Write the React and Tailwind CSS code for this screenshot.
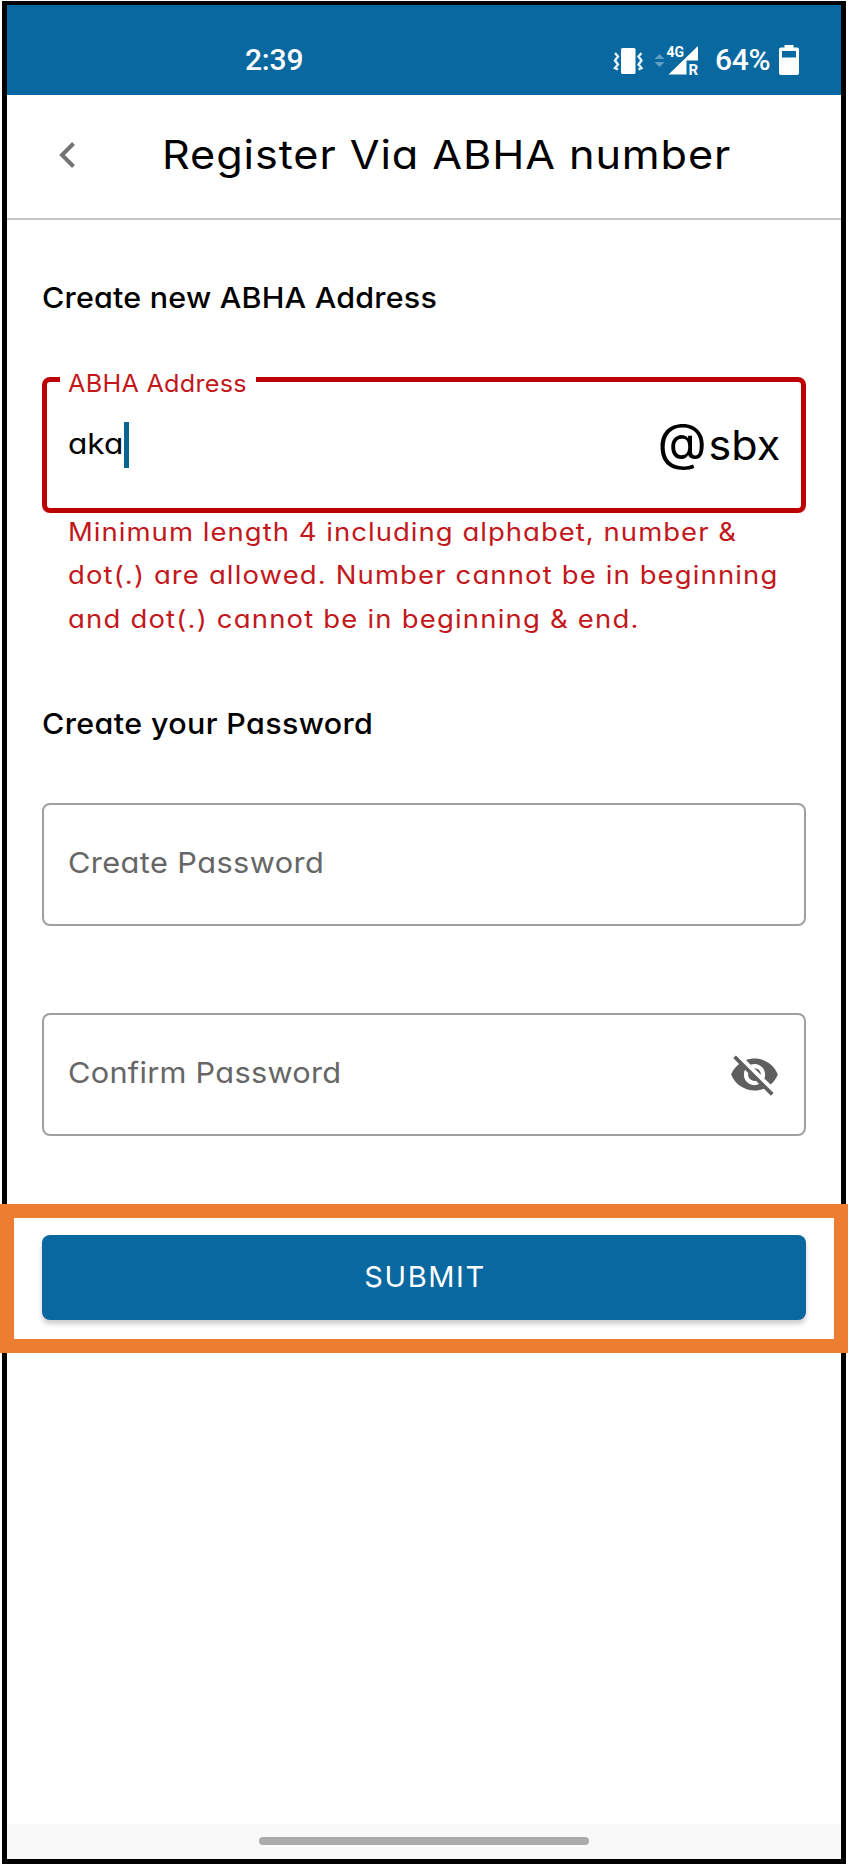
import { MdVisibilityOff } from "react-icons/md";

function StatusIcons() {
  return (
    <svg className="block h-[40px] w-[92px]" viewBox="0 -4 92 40" fill="none">
      <rect x="8" y="4" width="14.500" height="26" rx="1.5" fill="#fff" />
      <path d="M2 9l3 3.500-3 4 3 4-3 3.500 3 1.500M28.500 9l-3 3.500 3 4-3 4 3 3.500-3 1.500" stroke="#e8f4fb" strokeWidth="2.400" />
      <path d="M41.500 15l5-5 5 5zM41.500 18l5 5 5-5z" fill="#5f9fc4" />
      <path d="M85 2v14.500H73.500V30.500H55.500z" fill="#fff" />
      <path d="M52 0h19.500v10.500l-4.500 3H52z" fill="#08689f" />
      <text x="53.500" y="12.500" fill="#fff" fontFamily="Roboto, sans-serif" fontWeight="700" fontSize="14">4G</text>
      <text x="75.500" y="30.500" fill="#fff" fontFamily="Roboto, sans-serif" fontWeight="700" fontSize="15">R</text>
    </svg>
  );
}

function PasswordField({ label, labelClass, icon, className }) {
  return (
    <div className={`${className} flex h-[123px] items-center justify-between rounded-[8px] border-2 border-[#a0a0a0] pr-[24px] pl-[24px] text-[29px] text-[#666666]`}>
      <span className={`origin-left scale-x-[1.06] pb-[4px] ${labelClass}`}>{label}</span>
      {icon}
    </div>
  );
}

export default function App() {
  return (
    <div className="h-[1864px] w-[848px] bg-white px-[2px] pt-px font-[Inter,'Liberation_Sans',sans-serif] text-black [font-feature-settings:'cv11']">
      <div className="flex h-[1863px] flex-col border-[5px] border-t-[4px] border-black bg-white">
        <div className="flex h-[90px] shrink-0 items-center bg-[#08689f] pt-[19px] pl-[238px] font-[Roboto,sans-serif] text-[30px] font-medium text-white">
          <span className="w-[368px] tracking-[-0.2px]">2:39</span>
          <StatusIcons />
          <span className="ml-[10px] w-[56px] tracking-[-0.3px]">64%</span>
          <svg className="ml-[8px] h-[30px] w-[20px]" viewBox="0 0 20 30">
            <path fillRule="evenodd" fill="#fff" d="M5.500 0h9v2.500H18a2 2 0 0 1 2 2V28a2 2 0 0 1-2 2H2a2 2 0 0 1-2-2V4.500a2 2 0 0 1 2-2h3.500zM3 6v6.500h14V6z" />
          </svg>
        </div>
        <header className="flex h-[125px] shrink-0 items-center border-b-2 border-[#c4c4c4] pb-[3px] pl-[51px]">
          <svg className="h-[26px] w-[18px]" viewBox="0 0 18 26" fill="none">
            <path d="M15.500 1.500L4 13l11.500 11.500" stroke="#737373" strokeWidth="4" />
          </svg>
          <h1 className="ml-[86px] origin-left scale-x-[1.08] text-[40px] leading-none tracking-[0.85px] whitespace-nowrap">Register Via ABHA number</h1>
        </header>
        <main className="flex flex-1 flex-col px-[35px] pt-[58px]">
          <h2 className="origin-left scale-x-[1.05] text-[29px] leading-[40px] font-medium tracking-[0.2px]">Create new ABHA Address</h2>
          <div className="relative mt-[59px] flex h-[136px] items-center justify-between rounded-[8px] border-[5px] border-[#bd0000] pr-[21px] pl-[21px]">
            <span className="absolute -top-[12px] left-[13px] w-[196px] bg-white pl-[8px] text-[24px] leading-[28px] text-[#c2181c]">
              <span className="inline-block origin-left scale-x-[1.05] tracking-[0.25px] whitespace-nowrap">ABHA Address</span>
            </span>
            <span className="flex items-center text-[29px]">
              <span className="w-[56px] pb-[2px]">
                <span className="inline-block origin-left scale-x-[1.09]">aka</span>
              </span>
              <span className="h-[46px] w-[5px] bg-[#0a6390]" />
            </span>
            <span className="flex items-baseline pb-[7px] text-[41px] leading-none">
              <span className="mr-[5px] text-[51px] leading-none">@</span>
              <span className="origin-right scale-x-[1.05]">sbx</span>
            </span>
          </div>
          <p className="-mt-[2px] flex flex-col items-start pl-[26px] text-[25px] leading-[43.300px] whitespace-nowrap text-[#c2181c]">
            <span className="origin-left scale-x-[1.1] tracking-[0.93px]">Minimum length 4 including alphabet, number &amp;</span>
            <span className="origin-left scale-x-[1.1] tracking-[1.02px]">dot(.) are allowed. Number cannot be in beginning</span>
            <span className="origin-left scale-x-[1.1] tracking-[1.08px]">and dot(.) cannot be in beginning &amp; end.</span>
          </p>
          <h2 className="mt-[63px] origin-left scale-x-[1.05] text-[29px] leading-[40px] font-medium tracking-[0.35px]">Create your Password</h2>
          <PasswordField className="mt-[59px]" label="Create Password" labelClass="tracking-[0.37px]" />
          <PasswordField
            className="mt-[87px]"
            label="Confirm Password"
            labelClass="tracking-[0.25px]"
            icon={<MdVisibilityOff className="size-[51px] text-[#5f5f5f]" />}
          />
          <div className="-mx-[42px] mt-[68px] h-[149px] border-[14px] border-[#ed7d31] bg-white px-[28px] pt-[17px]">
            <button className="flex h-[85px] w-full items-center justify-center rounded-[8px] bg-[#08689f] pb-[2px] pl-[2px] text-[29px] tracking-[1.6px] text-white shadow-[0_4px_5px_rgba(0,0,0,0.2)]">
              SUBMIT
            </button>
          </div>
        </main>
        <footer className="flex h-[35px] shrink-0 justify-center bg-[#f9f9f9] pt-[13px]">
          <div className="h-[8px] w-[330px] rounded-full bg-[#ababab]" />
        </footer>
      </div>
    </div>
  );
}
